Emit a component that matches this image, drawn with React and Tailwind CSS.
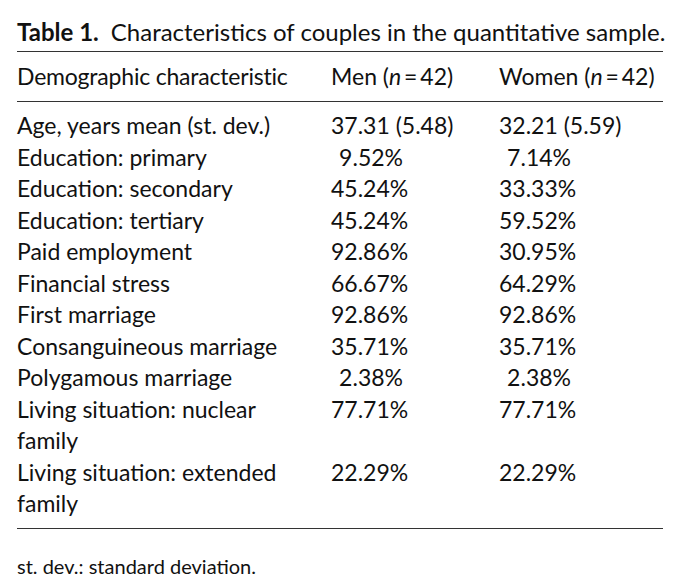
const rows = [
  ['Age, years mean (st. dev.)', '37.31 (5.48)', '32.21 (5.59)', true],
  ['Education: primary', '9.52%', '7.14%'],
  ['Education: secondary', '45.24%', '33.33%'],
  ['Education: tertiary', '45.24%', '59.52%'],
  ['Paid employment', '92.86%', '30.95%'],
  ['Financial stress', '66.67%', '64.29%'],
  ['First marriage', '92.86%', '92.86%'],
  ['Consanguineous marriage', '35.71%', '35.71%'],
  ['Polygamous marriage', '2.38%', '2.38%'],
  ['Living situation: nuclear family', '77.71%', '77.71%'],
  ['Living situation: extended family', '22.29%', '22.29%'],
];

function Value({ text, wide }) {
  if (wide) return <span className="whitespace-nowrap">{text}</span>;
  return <span className="inline-block w-[72px] text-right whitespace-nowrap">{text}</span>;
}

export default function App() {
  return (
    <div className="bg-white w-[680px] h-[581px] px-[17px] text-[#111] font-['Lato',sans-serif]">
      <div className="w-[646px]">
        {/* Caption */}
        <div className="pt-[16px] pb-[4px] text-[24px] leading-[31px] whitespace-nowrap">
          <span className="font-bold">Table 1.</span>
          <span className="ml-[12px]">Characteristics of couples in the quantitative sample.</span>
        </div>

        <div className="border-t-[1.5px] border-[#333]" />

        {/* Header */}
        <div className="grid grid-cols-[314px_168px_1fr] h-[49px] items-center text-[23px] leading-[31px]">
          <div className="tracking-[-0.2px]">Demographic characteristic</div>
          <div>Men (<i>n</i>&thinsp;=&thinsp;42)</div>
          <div>Women (<i>n</i>&thinsp;=&thinsp;42)</div>
        </div>

        <div className="border-t-[1.5px] border-[#333]" />

        {/* Body */}
        <div className="pt-[8px] pb-[8px] text-[23px] leading-[31.5px]">
          {rows.map(([label, men, women, wide]) => (
            <div key={label} className="grid grid-cols-[314px_168px_1fr]">
              <div className="pr-[24px]">{label}</div>
              <div><Value text={men} wide={wide} /></div>
              <div><Value text={women} wide={wide} /></div>
            </div>
          ))}
        </div>

        <div className="border-t-[1.5px] border-[#333]" />

        {/* Footnote */}
        <div className="pt-[25px] text-[20px] leading-[24px]">st. dev.: standard deviation.</div>
      </div>
    </div>
  );
}
